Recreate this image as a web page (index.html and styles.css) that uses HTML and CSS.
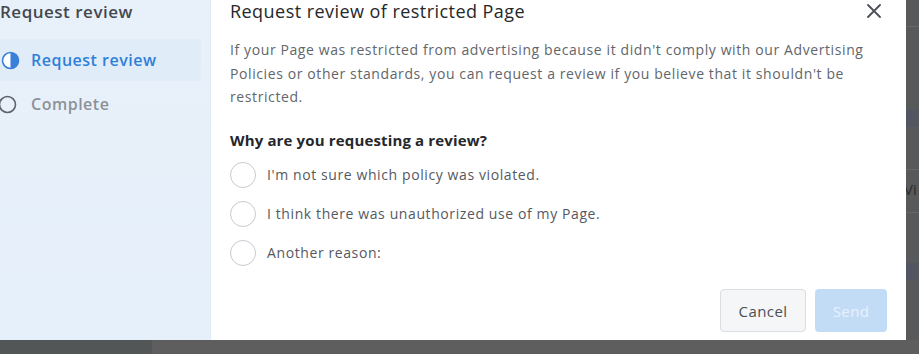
FILE: index.html
```html
<!DOCTYPE html>
<html lang="en">
<head>
    <meta charset="UTF-8">
    <meta name="viewport" content="width=device-width, initial-scale=1.0">
    <title>Request review of restricted Page</title>
    <link rel="stylesheet" href="styles.css">
</head>
<body>
    <div class="screen">
        <div class="modal">
            <aside class="steps">
                <h2>Request review</h2>
                <ul class="step-list">
                    <li class="step active">
                        <svg class="step-icon" width="19" height="19" viewBox="0 0 19 19">
                            <circle cx="9.5" cy="9.5" r="8" fill="#fff" stroke="#3a7fd9" stroke-width="1.6"/>
                            <path d="M9.5 1.5 A8 8 0 0 1 9.5 17.5 Z" fill="#3a7fd9"/>
                        </svg>
                        <span>Request review</span>
                    </li>
                    <li class="step">
                        <svg class="step-icon pending" width="19" height="19" viewBox="0 0 19 19">
                            <circle cx="9.5" cy="9.5" r="8" fill="none" stroke="#5d6168" stroke-width="1.6"/>
                        </svg>
                        <span>Complete</span>
                    </li>
                </ul>
            </aside>

            <section class="dialog">
                <header class="dialog-header">
                    <h1>Request review of restricted Page</h1>
                    <button class="close-btn" aria-label="Close">
                        <svg width="14" height="14" viewBox="0 0 14 14">
                            <path d="M1 1 L13 13 M13 1 L1 13" stroke="#4b4f56" stroke-width="1.8" stroke-linecap="round"/>
                        </svg>
                    </button>
                </header>

                <p class="intro">If your Page was restricted from advertising because it didn't comply with our Advertising Policies or other standards, you can request a review if you believe that it shouldn't be restricted.</p>

                <h3>Why are you requesting a review?</h3>

                <div class="options">
                    <label class="option"><span class="radio"></span>I'm not sure which policy was violated.</label>
                    <label class="option"><span class="radio"></span>I think there was unauthorized use of my Page.</label>
                    <label class="option"><span class="radio"></span>Another reason:</label>
                </div>

                <footer class="dialog-footer">
                    <button class="btn btn-cancel">Cancel</button>
                    <button class="btn btn-send" disabled>Send</button>
                </footer>
            </section>
        </div>

        <!-- page behind the overlay, only a sliver shows -->
        <div class="behind">
            <div class="behind-row r1"></div>
            <div class="behind-row r2"></div>
            <div class="behind-band"></div>
            <div class="behind-row r3"></div>
            <div class="behind-row r4">Vi</div>
            <div class="behind-row r5"></div>
            <div class="behind-band"></div>
            <div class="behind-row r6"></div>
        </div>
    </div>

    <div class="bottom-bar">
        <div class="bottom-left"></div>
        <div class="bottom-right"></div>
    </div>
</body>
</html>
```

FILE: styles.css
```css
body {
    margin: 0;
    height: 354px;
    overflow: hidden;
    background: #58595b;
    font-family: 'Open Sans', 'Noto Sans', sans-serif;
}

.screen {
    display: flex;
    height: 340px;
}

.modal {
    display: flex;
    width: 918px;
    margin-left: -12px;
    flex-shrink: 0;
    background: white;
    box-shadow: 0 1px 0 #c4c5c7;
}

/* left step panel */
.steps {
    width: 223px;
    flex-shrink: 0;
    box-sizing: border-box;
    padding: 0 9px 0 0;
    background: linear-gradient(180deg, #e8f1fa 0%, #e6f0fa 100%);
    border-right: 1px solid #e1eaf4;
}

.steps h2 {
    margin: 0;
    padding-left: 12px;
    font-size: 17px;
    letter-spacing: 0.5px;
    line-height: 24px;
    font-weight: 600;
    color: #44484e;
    white-space: nowrap;
}

.step-list {
    list-style: none;
    margin: 15px 0 0 0;
    padding: 0;
    display: flex;
    flex-direction: column;
    gap: 2px;
}

.step {
    display: flex;
    align-items: center;
    height: 42px;
    padding-left: 13px;
    font-size: 16px;
    letter-spacing: 0.5px;
    font-weight: 600;
    color: #8d9197;
}

.step.active {
    background: #e0ecf8;
    color: #2f80d8;
}

.step-icon {
    margin-right: 11px;
    flex-shrink: 0;
}

.step-icon.pending {
    margin-left: -3px;
    margin-right: 14px;
}

/* right dialog */
.dialog {
    flex: 1;
    display: flex;
    flex-direction: column;
    padding: 0 19px 8px 19px;
}

.dialog-header {
    display: flex;
    align-items: center;
    justify-content: space-between;
    height: 22px;
}

.dialog-header h1 {
    margin: 0;
    font-size: 18px;
    letter-spacing: 0.45px;
    font-weight: 400;
    color: #25272b;
}

.close-btn {
    width: 27px;
    height: 22px;
    padding: 0;
    border: none;
    background: none;
    display: flex;
    align-items: center;
    justify-content: center;
    cursor: pointer;
}

.intro {
    margin: 16px 0 0 0;
    font-size: 14px;
    letter-spacing: 0.6px;
    line-height: 23.5px;
    color: #62666c;
}

.dialog h3 {
    margin: 21px 0 0 0;
    font-size: 15px;
    letter-spacing: 0.15px;
    line-height: 20px;
    font-weight: 700;
    color: #25272b;
}

.options {
    display: flex;
    flex-direction: column;
    gap: 13px;
    margin-top: 12px;
}

.option {
    display: flex;
    align-items: center;
    height: 26px;
    font-size: 14px;
    letter-spacing: 0.6px;
    color: #55595f;
}

.radio {
    width: 24px;
    height: 24px;
    border: 1px solid #c6cad0;
    border-radius: 50%;
    margin-right: 11px;
    background: white;
}

.dialog-footer {
    margin-top: auto;
    display: flex;
    justify-content: flex-end;
    gap: 9px;
}

.btn {
    height: 43px;
    border-radius: 4px;
    font-family: inherit;
    font-size: 15px;
    letter-spacing: 0.4px;
    padding: 0;
}

.btn-cancel {
    width: 86px;
    background: #f5f6f7;
    border: 1px solid #dadde1;
    color: #4b4f56;
}

.btn-send {
    width: 72px;
    background: #c3dcf5;
    border: none;
    color: #e8f2fc;
}

/* page behind overlay */
.behind {
    flex: 1;
    overflow: hidden;
    display: flex;
    flex-direction: column;
}

.behind-row {
    border-bottom: 1px solid #67686a;
    box-sizing: border-box;
}

.r1 { height: 27px; }
.r2 { height: 83px; border-bottom: none; }
.behind-band { height: 17px; background: #535560; }
.r3 { height: 43px; }
.r4 {
    height: 43px;
    font-size: 15px;
    line-height: 38px;
    color: #2a2b2d;
    margin-left: -2px;
}
.r5 { height: 50px; border-bottom: none; }
.r6 { flex: 1; border-bottom: none; }

.bottom-bar {
    display: flex;
    height: 14px;
}

.bottom-left {
    width: 152px;
    background: #535657;
}

.bottom-right {
    flex: 1;
    background: #5e5e5f;
}
```
